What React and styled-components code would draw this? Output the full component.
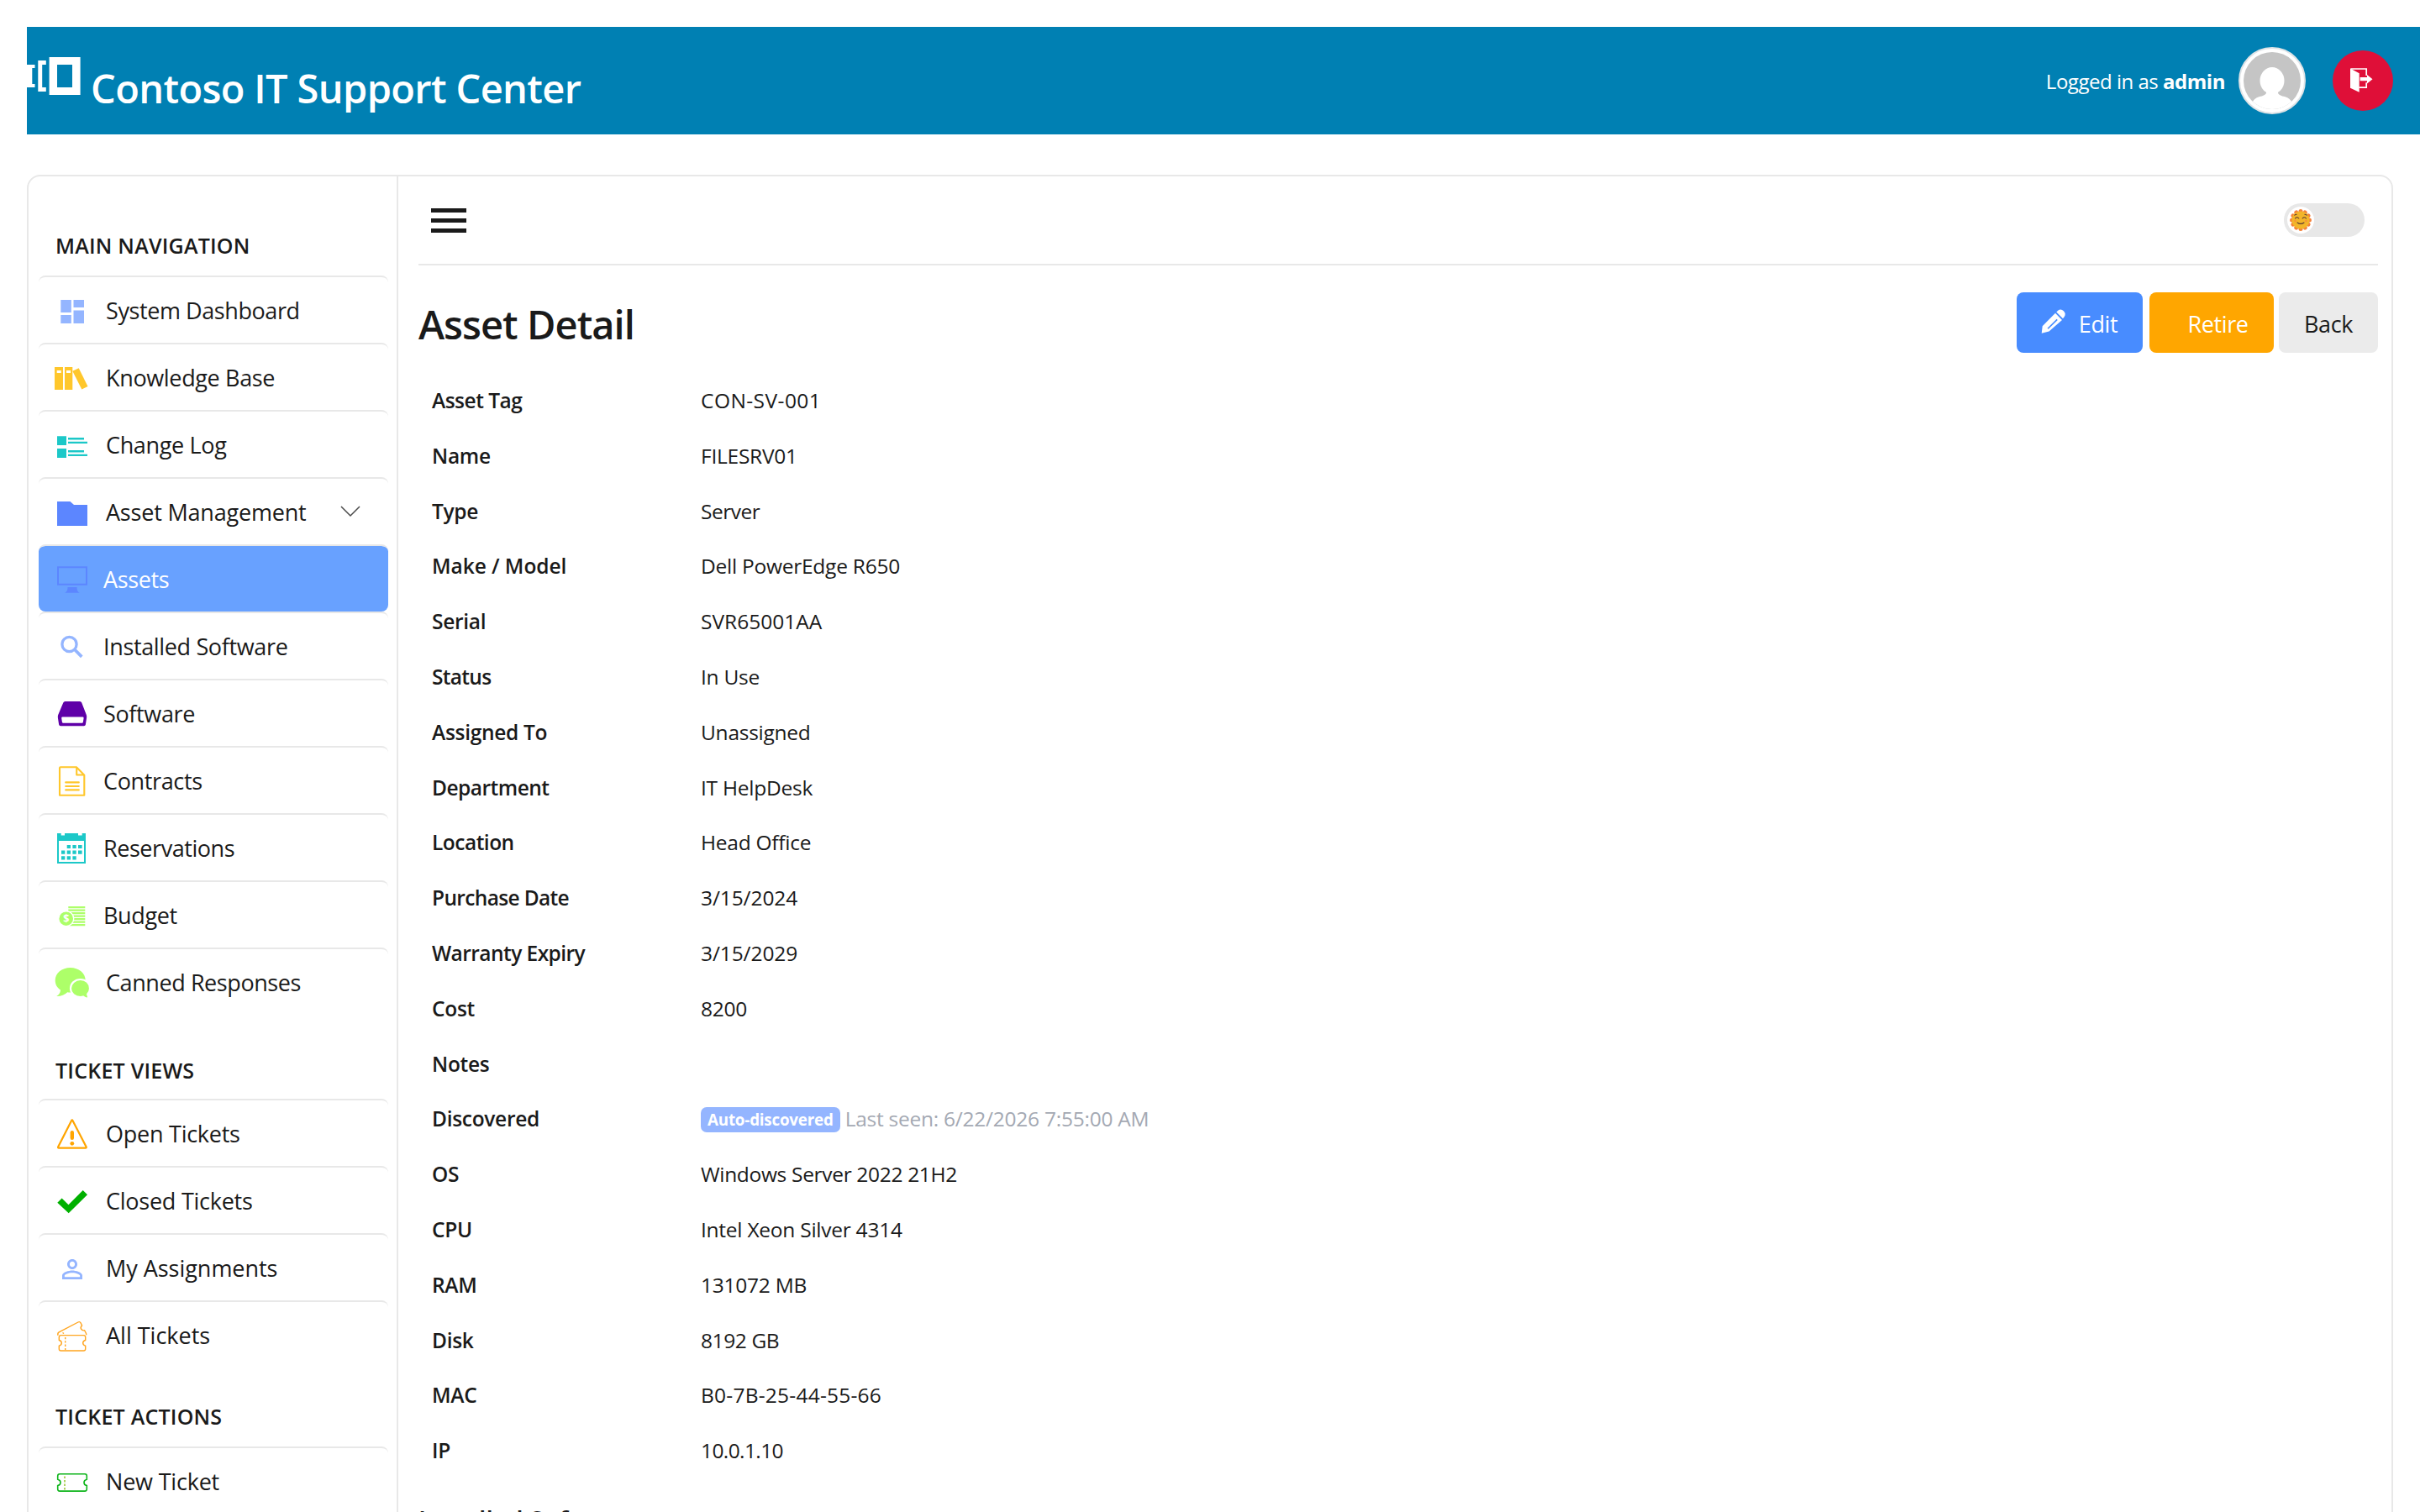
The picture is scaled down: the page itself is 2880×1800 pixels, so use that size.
import React from 'react'
import styled, { createGlobalStyle } from 'styled-components'

const GlobalStyle = createGlobalStyle`
  * {
    box-sizing: border-box;
  }
  body {
    margin: 0;
    background: #fff;
    color: #1a1a1a;
    font-family: "Segoe UI", "Open Sans", "Noto Sans", sans-serif;
    overflow: hidden;
  }
`

const Page = styled.div`
  height: 1800px;
  padding-top: 32px;
  padding-left: 32px;
  overflow: hidden;
`

const Header = styled.header`
  display: flex;
  justify-content: space-between;
  height: 128px;
  padding-right: 32px;
  background: #0080b3;
  color: #fff;
`

const Brand = styled.div`
  display: flex;
  align-items: flex-start;
  gap: 12px;
  padding-top: 36px;

  svg {
    display: block;
  }
`

const BrandName = styled.h1`
  margin: 5px 0 0;
  font-size: 47px;
  font-weight: 600;
  line-height: 64px;
  letter-spacing: -0.63px;
`

const UserArea = styled.div`
  display: flex;
  align-items: center;
`

const LoggedIn = styled.span`
  margin-right: 16px;
  padding-top: 1px;
  font-size: 24px;
  letter-spacing: -0.48px;
`

const Avatar = styled.div`
  width: 80px;
  height: 80px;
  margin-right: 32px;
  padding: 4px;
  border: 2px solid #dfe3e6;
  border-radius: 50%;
  background: #fff;

  svg {
    display: block;
    border-radius: 50%;
  }
`

const Logout = styled.button`
  display: flex;
  align-items: center;
  justify-content: center;
  width: 72px;
  height: 72px;
  padding: 0;
  border: 0;
  border-radius: 50%;
  background: #df0f38;
`

const Panel = styled.div`
  display: flex;
  width: 2816px;
  height: 1800px;
  margin-top: 48px;
  border: 2px solid #e8e8e8;
  border-radius: 16px;
`

const Sidebar = styled.nav`
  width: 440px;
  padding: 0 10px 0 12px;
  border-right: 2px solid #e8e8e8;
`

const SectionTitle = styled.h2`
  display: flex;
  align-items: center;
  height: ${props => props.$height || 70}px;
  margin: ${props => props.$top}px 0 0;
  padding-left: 20px;
  padding-bottom: 2px;
  font-size: 25px;
  font-weight: 600;
  letter-spacing: 0.22px;
  text-transform: uppercase;
`

const NavItem = styled.a`
  display: flex;
  align-items: center;
  height: 80px;
  padding-left: 18px;
  padding-right: 33px;
  border-top: 2px solid #e8e8e8;
  border-radius: 8px;
  font-size: 27px;
  letter-spacing: -0.35px;
  color: ${props => (props.$active ? '#fff' : '#1a1a1a')};
  background: ${props => (props.$active ? '#68a1ff' : 'transparent')};
  background-clip: padding-box;

  svg {
    flex: none;
  }
`

const NavLabel = styled.span`
  flex: 1;
  margin-left: ${props => (props.$sub ? 15 : 18)}px;
  padding-top: 1px;
  letter-spacing: ${props => props.$spacing ?? -0.35}px;
  white-space: nowrap;
`

const Content = styled.main`
  flex: 1;
  padding: 0 16px 0 24px;
`

const Toolbar = styled.div`
  display: flex;
  align-items: center;
  justify-content: space-between;
  height: 106px;
  padding: 0 16px 0 15px;
  border-bottom: 2px solid #e8e8e8;
`

const Toggle = styled.div`
  width: 96px;
  height: 40px;
  padding: 4px;
  border-radius: 20px;
  background: #e8e8e8;
`

const Knob = styled.div`
  display: flex;
  align-items: center;
  justify-content: center;
  width: 32px;
  height: 32px;
  border-radius: 50%;
  background: #fff;
`

const TitleRow = styled.div`
  display: flex;
  align-items: center;
  height: 72px;
  margin: 32px 0 23.6px;
`

const Title = styled.h1`
  flex: 1;
  margin: 4px 0 0;
  font-size: 47px;
  font-weight: 600;
  line-height: 64px;
  letter-spacing: -0.95px;
`

const Button = styled.button`
  display: flex;
  align-items: center;
  justify-content: center;
  width: ${props => props.$width}px;
  height: 72px;
  margin-left: ${props => props.$gap || 0}px;
  padding: ${props => props.$padding || '2px 0 0'};
  border: 0;
  border-radius: 8px;
  background: ${props => props.$bg};
  color: ${props => props.$color || '#fff'};
  font-family: inherit;
  font-size: 27px;
  letter-spacing: -0.4px;

  svg {
    margin: -4px 14px 0 0;
  }
`

const Row = styled.div`
  display: grid;
  grid-template-columns: 320px 1fr;
  height: 65.8px;
  align-items: center;
  padding-left: 16px;
  font-size: 24.5px;
  letter-spacing: -0.25px;
`

const Label = styled.div`
  font-weight: 600;
  letter-spacing: ${props => props.$spacing ?? -0.3}px;
`

const Value = styled.div`
  display: flex;
  align-items: center;
  letter-spacing: ${props => props.$spacing ?? -0.25}px;
`

const Badge = styled.span`
  display: flex;
  align-items: center;
  height: 30px;
  margin-top: 3px;
  margin-right: 6px;
  padding: 0 8px;
  border-radius: 7px;
  background: #94b5ff;
  color: #fff;
  font-size: 18.8px;
  font-weight: 700;
  letter-spacing: -0.2px;
`

const Muted = styled.span`
  color: #a4a9b3;
`

const SubTitle = styled.h3`
  margin: 30px 0 0;
  font-size: 30px;
  font-weight: 600;
  line-height: 40px;
`

const Icon = ({ children }) => (
  <svg width="44" height="44" viewBox="0 0 44 44" fill="none">
    {children}
  </svg>
)

const icons = {
  dashboard: (
    <Icon>
      <path fill="#94b5ff" d="M8.3 10h12.5v15H8.3zM23.5 10H36v9H23.5zM8.3 28h12.5v10H8.3zM23.5 22.5H36V38H23.5z" />
    </Icon>
  ),
  books: (
    <Icon>
      <path fill="#ffc72c" fillRule="evenodd" d="M1 10h10v27H1zM3.7 14v3h5v-3zM13 10h9.3v27H13zM15 14v3h5v-3z" />
      <path fill="#ffc72c" d="M22.3 14.7l7.4-3.4 10.8 21.6-7.2 3.6z" />
    </Icon>
  ),
  log: (
    <Icon>
      <path fill="#1cc8c8" d="M4 12.3h11V23H4zM4 27h11v11H4zM17 14h19v2.6H17zM17 18.7h23V21H17zM17 29h19v2.6H17zM17 33.7h23V36H17z" />
    </Icon>
  ),
  folder: (
    <Icon>
      <path fill="#5c86ff" d="M4 10h15.5l4.5 4h16v25H4z" />
    </Icon>
  ),
  monitor: (
    <Icon>
      <path stroke="#5c86ff" strokeWidth="2" d="M5 8.2h34v20.5H5z" />
      <path fill="#5c86ff" d="M16.5 32h11c0 4 1 5.5 3.3 6.7H13.2c2.3-1.2 3.3-2.7 3.3-6.7z" />
    </Icon>
  ),
  search: (
    <Icon>
      <circle cx="18.5" cy="20" r="8.6" stroke="#94b5ff" strokeWidth="3.3" />
      <path stroke="#94b5ff" strokeWidth="3.8" d="M24.5 26l8.8 8.8" />
    </Icon>
  ),
  drive: (
    <Icon>
      <path fill="#5f00a8" fillRule="evenodd" d="M13.5 8h17.5q1.6 0 2.2 1.5l5.6 14.5q.6 1.6.3 3.5l-1.2 8q-.3 1.8-2 1.8H8.1q-1.7 0-2-1.8l-1.2-8q-.3-1.900.3-3.500L11.300 9.500Q11.900 8 13.500 8zM10.500 26.600q-1.500 0-1.300 1.400l.7 4.400q.2 1.300 1.300 1.300h22.400q1.100 0 1.300-1.300l.7-4.400q.2-1.400-1.300-1.400z" />
    </Icon>
  ),
  document: (
    <Icon>
      <path stroke="#ffc72c" strokeWidth="2.1" strokeLinejoin="round" d="M8 6.300h19l9.300 9.500v23.900H7V7.300q0-1 1-1zM27.200 6.500V15.500h9" />
      <path stroke="#ffc72c" strokeWidth="2.1" strokeLinecap="round" d="M14.200 24.400h15.600M14.200 29h15.600M14.200 33.400h15.600" />
    </Icon>
  ),
  calendar: (
    <Icon>
      <path fill="#1cc8c8" fillRule="evenodd" d="M4 5h4.700v2.500H13V5h16v2.500h4.700V5H38v36H4zM6 14v25h30V14z" />
      <path fill="#1cc8c8" d="M15.700 19H20v4h-4.300zM22.400 19h4.300v4h-4.300zM29 19h4.600v4H29zM9 25.600h4.300v4.200H9zM15.700 25.600H20v4.200h-4.300zM22.400 25.600h4.300v4.200h-4.300zM29 25.600h4.600v4.200H29zM9 32.200h4.300v4.400H9zM15.700 32.200H20v4.400h-4.300zM22.400 32.200h4.300v4.400h-4.300z" />
    </Icon>
  ),
  money: (
    <Icon>
      <path stroke="#adff69" strokeWidth="2.3" d="M17.300 13.100h20M17.300 16.600h20M17.300 20.100h20M17.300 23.600h20M17.300 27.100h20M17.300 30.600h20M17.300 34.100h20" />
      <circle cx="14.7" cy="26.7" r="9" fill="#adff69" stroke="#fff" strokeWidth="1.4" />
      <text x="14.7" y="31.2" textAnchor="middle" fontSize="12.5" fontWeight="700" fill="#fff">$</text>
    </Icon>
  ),
  comments: (
    <Icon>
      <path fill="#adff69" d="M19.700 5c10 0 18 6.500 18 15s-8 14.500-18 14.500q-2 0-3.500-.3-5 5-12.900 4.800 4.500-3 4.700-7.500C4 29 1.700 25 1.700 20c0-8.500 8-15 18-15z" />
      <path fill="#adff69" stroke="#fff" strokeWidth="2.2" d="M31.700 19c6.500 0 11.300 4.600 11.300 10.700 0 2.700-1 5-2.800 6.900q.3 3 2.600 5-5 .3-7.800-2.100-1.500.5-3.300.5c-6.500 0-11.700-4.300-11.700-10.300S25.200 19 31.700 19z" />
    </Icon>
  ),
  warning: (
    <Icon>
      <path stroke="#ffa500" strokeWidth="2.2" strokeLinejoin="round" d="M21 7.200q.8-1.500 1.600 0l16 31q.6 1.500-.8 1.500H6q-1.400 0-.8-1.500z" />
      <path stroke="#ffa500" strokeWidth="4.4" strokeLinecap="round" d="M21.800 21.300v6.400" />
      <circle cx="21.8" cy="34.3" r="2.4" fill="#ffa500" />
    </Icon>
  ),
  check: (
    <Icon>
      <path fill="#00b000" d="M4.300 24.700l5.300-5.300 7.900 7.900L34.700 10l5.300 5.300-22.300 22z" />
    </Icon>
  ),
  person: (
    <Icon>
      <path
        fill="#94b5ff"
        transform="translate(4 6) scale(1.5)"
        d="M12 5.900c1.160 0 2.100.94 2.100 2.100s-.94 2.100-2.100 2.100S9.900 9.160 9.900 8s.94-2.100 2.100-2.100m0 9c2.970 0 6.100 1.460 6.100 2.100v1.100H5.900V17c0-.64 3.130-2.100 6.100-2.100M12 4C9.790 4 8 5.790 8 8s1.790 4 4 4 4-1.790 4-4-1.790-4-4-4zm0 9c-2.670 0-8 1.340-8 4v3h16v-3c0-2.660-5.330-4-8-4z"
      />
    </Icon>
  ),
  tickets: (
    <Icon>
      <g stroke="#ffa51f" strokeWidth="1.4" strokeLinejoin="round">
        <path d="M8.500 22.600h27q2.200 0 2.200 2.200v3.700q-3 .7-3 3.300t3 3.300v3.700q0 2.200-2.200 2.200h-27q-2.200 0-2.200-2.200v-3.700q3-.7 3-3.300t-3-3.300v-3.700q0-2.200 2.200-2.200z" />
        <path strokeDasharray="2.3 2" d="M13.700 25v15" />
        <path d="M5 22.800q-.8-2.800 1.300-3.900L29 7q2-1 3 .8l1.600 3.200q-2.300 2-1 4.200t4 1.500l1.700 3.300q.5 1.200.4 2.300M10.500 19.500l1.500 1" />
      </g>
    </Icon>
  ),
  ticket: (
    <Icon>
      <g stroke="#0db41a" strokeWidth="1.6">
        <path d="M7 13.700h30q2.300 0 2.300 2.300v4.200q-3.300.8-3.300 3.700t3.300 3.700v4.200q0 2.300-2.300 2.300H7q-2.300 0-2.300-2.300v-4.200q3.300-.8 3.300-3.700t-3.300-3.700V16q0-2.300 2.300-2.300z" />
        <path stroke="#9fc83a" strokeDasharray="2.5 2" d="M13 16.500v16" />
      </g>
    </Icon>
  )
}

const Chevron = () => (
  <svg width="24" height="14" viewBox="0 0 24 14" fill="none">
    <path stroke="#4a4a4a" strokeWidth="1.5" d="M1 1l11 11L23 1" />
  </svg>
)

const sections = [
  {
    title: 'Main Navigation',
    top: 48,
    items: [
      { icon: 'dashboard', label: 'System Dashboard', spacing: -0.42 },
      { icon: 'books', label: 'Knowledge Base' },
      { icon: 'log', label: 'Change Log' },
      { icon: 'folder', label: 'Asset Management', spacing: -0.2, open: true },
      { icon: 'monitor', label: 'Assets', sub: true, active: true },
      { icon: 'search', label: 'Installed Software', sub: true },
      { icon: 'drive', label: 'Software', sub: true },
      { icon: 'document', label: 'Contracts', sub: true },
      { icon: 'calendar', label: 'Reservations', spacing: -0.45, sub: true },
      { icon: 'money', label: 'Budget', sub: true },
      { icon: 'comments', label: 'Canned Responses', spacing: -0.42 }
    ]
  },
  {
    title: 'Ticket Views',
    top: 34,
    height: 66,
    items: [
      { icon: 'warning', label: 'Open Tickets', spacing: -0.25 },
      { icon: 'check', label: 'Closed Tickets', spacing: -0.25 },
      { icon: 'person', label: 'My Assignments', spacing: -0.03 },
      { icon: 'tickets', label: 'All Tickets', spacing: 0 }
    ]
  },
  {
    title: 'Ticket Actions',
    top: 24,
    items: [{ icon: 'ticket', label: 'New Ticket', spacing: -0.2 }]
  }
]

const details = [
  { label: 'Asset Tag', value: 'CON-SV-001', spacing: 0.45, labelSpacing: -0.5 },
  { label: 'Name', value: 'FILESRV01' },
  { label: 'Type', value: 'Server', spacing: -0.5 },
  { label: 'Make / Model', value: 'Dell PowerEdge R650', labelSpacing: -0.05 },
  { label: 'Serial', value: 'SVR65001AA', spacing: 0 },
  { label: 'Status', value: 'In Use', labelSpacing: -0.7 },
  { label: 'Assigned To', value: 'Unassigned' },
  { label: 'Department', value: 'IT HelpDesk', labelSpacing: -0.5 },
  { label: 'Location', value: 'Head Office', labelSpacing: -0.5 },
  { label: 'Purchase Date', value: '3/15/2024', spacing: -0.1, labelSpacing: -0.65 },
  { label: 'Warranty Expiry', value: '3/15/2029', spacing: -0.1, labelSpacing: -0.55 },
  { label: 'Cost', value: '8200' },
  { label: 'Notes', value: '' },
  {
    label: 'Discovered',
    value: (
      <>
        <Badge>Auto-discovered</Badge>
        <Muted>Last seen: 6/22/2026 7:55:00 AM</Muted>
      </>
    )
  },
  { label: 'OS', value: 'Windows Server 2022 21H2', spacing: -0.32 },
  { label: 'CPU', value: 'Intel Xeon Silver 4314' },
  { label: 'RAM', value: '131072 MB' },
  { label: 'Disk', value: '8192 GB', spacing: -0.4 },
  { label: 'MAC', value: 'B0-7B-25-44-55-66', spacing: 0.23 },
  { label: 'IP', value: '10.0.1.10', spacing: -0.6 }
]

const Logo = () => (
  <svg width="64" height="45" viewBox="0 0 64 45" fill="#fff">
    <path d="M0 9h9.500v4H6.300v19h3.200v4H0z" />
    <path d="M13.300 4h9.500v5h-4.600v27h4.600v5h-9.500z" />
    <path fillRule="evenodd" d="M26.600 0h37v45h-37zM36 9v27h18V9z" />
  </svg>
)

const AvatarImage = () => (
  <svg width="68" height="68" viewBox="0 0 68 68">
    <rect width="68" height="68" fill="#c5c5c5" />
    <ellipse cx="34" cy="34" rx="14.5" ry="16" fill="#fff" />
    <path fill="#fff" d="M27 44h14v5q2 3 8 4 7 2 9 8v7H10v-7q2-6 9-8 6-1 8-4z" />
  </svg>
)

const LogoutIcon = () => (
  <svg width="34" height="34" viewBox="0 0 34 34" fill="none">
    <path fill="#fff" d="M2 2.500l10.700 5.800v22.400L2 25.700z" />
    <path stroke="#fff" strokeWidth="1.7" d="M2.500 3H21.200v8M12.500 25.200h8.700v-6" />
    <path fill="#fff" d="M13.700 13H22v-3l6.500 5.200L22 20.400v-3.100h-8.300z" />
  </svg>
)

const MenuIcon = () => (
  <svg width="42" height="30" viewBox="0 0 42 30" fill="#1a1a1a">
    <path d="M0 1h42v5H0zM0 13h42v5H0zM0 25h42v5H0z" />
  </svg>
)

const SunIcon = () => (
  <svg width="26" height="26" viewBox="0 0 26 26">
    <g fill="#f5813a">
      {Array.from({ length: 12 }, (_, i) => (
        <circle key={i} cx="13" cy="2.6" r="2.5" transform={`rotate(${i * 30} 13 13)`} />
      ))}
    </g>
    <circle cx="13" cy="13" r="10.6" fill="#f2b529" />
    <g fill="none" stroke="#5a3a35" strokeWidth="1.1" strokeLinecap="round">
      <path d="M6.500 11q2-2.500 4.300 0M15.200 11q2-2.500 4.300 0M9 16q4 2.800 8 0" />
      <path d="M5.800 7.200q1-1 2.300-1M20.200 7.200q-1-1-2.300-1" />
    </g>
    <circle cx="6.5" cy="14" r="1.3" fill="#f5933a" />
    <circle cx="19.5" cy="14" r="1.3" fill="#f5933a" />
  </svg>
)

const PencilIcon = () => (
  <svg width="32" height="32" viewBox="0 0 32 32" fill="#fff">
    <path fillRule="evenodd" d="M1.700 29.700l1-8.400L18 5.700l8 8.300-15.500 13.600zM8.500 23.700l1.200 1L20.800 14l-1.200-1.300z" />
    <path d="M19.300 4.500l1.800-1.800q3.500-2.700 6.800.5t.7 7l-1.600 2z" />
  </svg>
)

export default function App() {
  return (
    <Page>
      <GlobalStyle />
      <Header>
        <Brand>
          <Logo />
          <BrandName>Contoso IT Support Center</BrandName>
        </Brand>
        <UserArea>
          <LoggedIn>
            Logged in as <b>admin</b>
          </LoggedIn>
          <Avatar>
            <AvatarImage />
          </Avatar>
          <Logout aria-label="Log out">
            <LogoutIcon />
          </Logout>
        </UserArea>
      </Header>
      <Panel>
        <Sidebar>
          {sections.map(section => (
            <div key={section.title}>
              <SectionTitle $top={section.top} $height={section.height}>
                {section.title}
              </SectionTitle>
              {section.items.map(item => (
                <NavItem key={item.label} $active={item.active}>
                  {icons[item.icon]}
                  <NavLabel $sub={item.sub} $spacing={item.spacing}>
                    {item.label}
                  </NavLabel>
                  {item.open && <Chevron />}
                </NavItem>
              ))}
            </div>
          ))}
        </Sidebar>
        <Content>
          <Toolbar>
            <MenuIcon />
            <Toggle>
              <Knob>
                <SunIcon />
              </Knob>
            </Toggle>
          </Toolbar>
          <TitleRow>
            <Title>Asset Detail</Title>
            <Button $bg="#488cff" $width={150} $padding="2px 2px 0 0">
              <PencilIcon />
              Edit
            </Button>
            <Button $bg="#ffa600" $width={148} $gap={8} $padding="2px 0 0 15px">
              Retire
            </Button>
            <Button $bg="#ebebeb" $color="#1a1a1a" $width={118} $gap={6}>
              Back
            </Button>
          </TitleRow>
          {details.map(row => (
            <Row key={row.label}>
              <Label $spacing={row.labelSpacing}>{row.label}</Label>
              <Value $spacing={row.spacing}>{row.value}</Value>
            </Row>
          ))}
          <SubTitle>Installed Software</SubTitle>
        </Content>
      </Panel>
    </Page>
  )
}
